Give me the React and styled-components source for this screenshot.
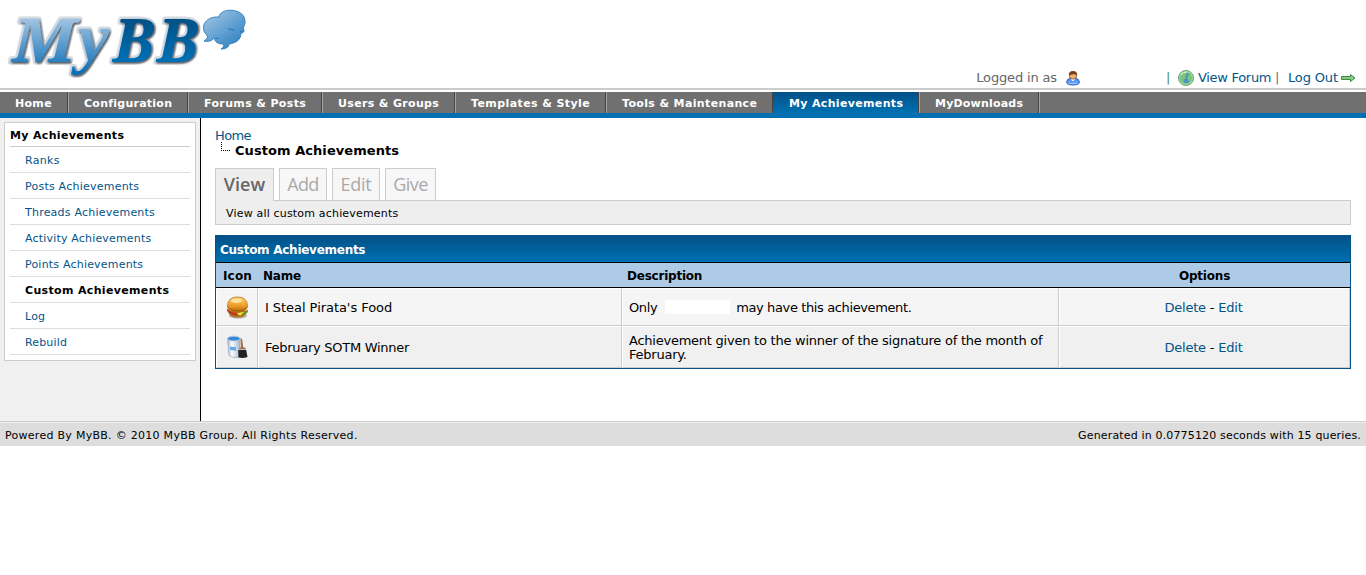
import React from "react";
import styled, { createGlobalStyle, css } from "styled-components";

const Global = createGlobalStyle`
  * { box-sizing: border-box; }
  body {
    margin: 0;
    background: #fff;
    color: #000;
    font: 13px/16px Verdana, "DejaVu Sans", sans-serif;
  }
`;

const T = styled.span`
  letter-spacing: ${(p) => p.$ls || 0}px;
  white-space: nowrap;
`;
const Link = styled.a`
  color: #035488;
  text-decoration: none;
  white-space: nowrap;
  ${(p) => p.$ls && css`letter-spacing: ${p.$ls}px;`}
`;

const Header = styled.header`
  display: flex;
  justify-content: space-between;
  align-items: flex-end;
  height: 90px;
  border-bottom: 2px solid #ccc;
`;
const Welcome = styled.div`
  display: flex;
  align-items: center;
  height: 20px;
  margin-right: 10px;
  color: #666;
`;
const UserSlot = styled.span`
  display: flex;
  width: 109px;
  padding-left: 8px;
`;
const Bar = styled.span`
  width: ${(p) => p.$w}px;
  color: ${(p) => (p.$green ? "#3f8f3f" : "#5f6f80")};
`;
const ForumLink = styled(Link)`
  width: 77px;
  margin-left: 4px;
`;
const LogoutLink = styled(Link)`
  width: 52px;
`;

const Menu = styled.nav`
  display: flex;
  height: 26px;
  margin-top: 2px;
  background: #707070;
  border-bottom: 5px solid #0070b2;
`;
const MenuItem = styled.a`
  width: ${(p) => p.$w}px;
  padding-left: 16px;
  border-right: 1px solid #444;
  box-shadow: 1px 0 0 #a5a5a5;
  background: ${(p) => (p.$active ? "linear-gradient(#025185, #0070b2)" : "transparent")};
  color: #fff;
  font-size: 11px;
  font-weight: bold;
  line-height: 23px;
  white-space: nowrap;
  letter-spacing: ${(p) => p.$ls}px;
  &:first-child { padding-left: 15px; }
`;

const Body = styled.div`
  display: flex;
  height: 303px;
`;
const Sidebar = styled.aside`
  width: 201px;
  padding: 4px;
  background: #f0f0f0;
  border-right: 1px solid #000;
`;
const SideBox = styled.div`
  width: 192px;
  height: 239px;
  padding: 0 5px;
  border: 1px solid #ccc;
  background: #fff;
  font-size: 11px;
`;
const SideTitle = styled.div`
  height: 24px;
  border-bottom: 1px solid #ccc;
  font-weight: bold;
  line-height: 25px;
`;
const SideItem = styled.div`
  height: 26px;
  padding-left: 15px;
  border-bottom: 1px solid #ddd;
  line-height: 27px;
  ${(p) => p.$active && css`font-weight: bold;`}
`;

const Page = styled.main`
  flex: 1;
  padding: 10px 15px 0 14px;
`;
const Crumb = styled.div`
  height: 15px;
`;
const CrumbActive = styled.div`
  display: flex;
  height: 15px;
  margin-bottom: 10px;
  padding-left: 6px;
  gap: 5px;
  font-weight: bold;
  line-height: 16px;
`;
const Branch = styled.span`
  width: 9px;
  height: 9px;
  margin-top: -1px;
  border-left: 1px dotted #000;
  border-bottom: 1px dotted #000;
`;
const Tabs = styled.div`
  display: flex;
  gap: 5px;
  height: 33px;
`;
const Tab = styled.div`
  position: relative;
  z-index: 1;
  width: ${(p) => p.$w}px;
  height: ${(p) => (p.$active ? 33 : 32)}px;
  border: 1px solid #ccc;
  border-bottom: none;
  background: ${(p) => (p.$active ? "#eee" : "#f7f7f7")};
  color: ${(p) => (p.$active ? "#666" : "#aaa")};
  font: ${(p) => (p.$active ? 600 : 400)} 18px/31px "Open Sans", sans-serif;
  letter-spacing: ${(p) => p.$ls}px;
  text-align: center;
`;
const TabText = styled.div`
  height: 25px;
  margin-top: -1px;
  padding-left: 10px;
  border: 1px solid #ccc;
  background: #eee;
  font-size: 11px;
  line-height: 25px;
`;

const Table = styled.section`
  margin-top: 10px;
  border: 1px solid #035488;
`;
const TableTitle = styled.div`
  height: 27px;
  padding-left: 4px;
  border-bottom: 1px solid #000;
  background: linear-gradient(#025185, #0070b2);
  color: #fff;
  font-size: 12px;
  font-weight: bold;
  line-height: 28px;
`;
const Row = styled.div`
  display: grid;
  grid-template-columns: 42px 364px 437px 1fr;
  height: ${(p) => p.$h}px;
  ${(p) => p.$head && css`
    padding-top: 1px;
    background: #adcbe7;
    border-bottom: 1px solid #000;
    font-size: 12px;
    font-weight: bold;
  `}
`;
const Cell = styled.div`
  display: flex;
  align-items: center;
  justify-content: ${(p) => (p.$center ? "center" : "flex-start")};
  padding-left: ${(p) => p.$pl || 0}px;
  line-height: 14px;
`;
const DataCell = styled(Cell)`
  padding-top: ${(p) => (p.$icon ? 0 : 2)}px;
  border: 1px solid #fff;
  border-right-color: #ccc;
  border-bottom-color: #ccc;
  background: ${(p) => (p.$alt ? "#f0f0f0" : "#f5f5f5")};
`;
const Blank = styled.span`
  width: 65px;
  height: 14px;
  margin: -3px 6px 0 8px;
  background: #fff;
`;
const OptionLinks = styled(T)`
  padding-right: 2px;
`;
const Footer = styled.footer`
  display: flex;
  justify-content: space-between;
  height: 25px;
  padding: 0 5px;
  border-top: 1px solid #ccc;
  box-shadow: inset 0 1px 0 #efefef;
  background: #ddd;
  font-size: 11px;
  line-height: 27px;
`;

const LogoSvg = styled.svg`
  overflow: visible;
`;

const Letters = ({ my, bb, ...rest }) => (
  <g {...rest}>
    <text x="12" y="62" fill={my} textLength="63" lengthAdjust="spacingAndGlyphs">M</text>
    <text x="78" y="61" fill={my} fontFamily="'Liberation Serif',serif" fontSize="67" textLength="31" lengthAdjust="spacingAndGlyphs">y</text>
    <text x="113" y="62" fill={bb} textLength="41" lengthAdjust="spacingAndGlyphs">B</text>
    <text x="157" y="62" fill={bb} textLength="41" lengthAdjust="spacingAndGlyphs">B</text>
  </g>
);

const Logo = () => (
  <LogoSvg width="260" height="88" viewBox="0 0 260 88">
    <defs>
      <linearGradient id="my" x1="0" y1="17" x2="0" y2="72" gradientUnits="userSpaceOnUse">
        <stop offset="0" stopColor="#a6c6e4" /><stop offset="1" stopColor="#0f70b7" />
      </linearGradient>
      <linearGradient id="bb" x1="0" y1="18" x2="0" y2="63" gradientUnits="userSpaceOnUse">
        <stop offset="0" stopColor="#035084" /><stop offset="1" stopColor="#0071b8" />
      </linearGradient>
      <linearGradient id="bubble" x1="0" y1="0" x2=".8" y2="1">
        <stop offset="0" stopColor="#a9cbe8" /><stop offset="1" stopColor="#2b7fc0" />
      </linearGradient>
      <filter id="soft" x="-10%" y="-20%" width="120%" height="150%">
        <feDropShadow dx="1" dy="1.2" stdDeviation="0.8" floodColor="#111" floodOpacity=".8" />
      </filter>
    </defs>
    <g fontFamily="'Noto Serif','DejaVu Serif',serif" fontWeight="bold" fontStyle="italic" fontSize="61" strokeLinejoin="round">
      <Letters my="#d0dcea" bb="#d8d8d8" stroke="#d3dbe4" strokeWidth="5" />
      <Letters my="url(#my)" bb="url(#bb)" filter="url(#soft)" />
    </g>
    <path d="M219 17C220 8 240 8 244 17C246 22 245 25 243 28C245 30 244 33 241 33C241 40 236 43 229 44C229 47 226 49 221 49C224 47 224 46 223 44C218 44 215 42 214 38C212 41 208 42 204 41C207 39 208 37 207 35C200 30 203 16 219 17Z" fill="url(#bubble)" stroke="#2c7cbc" strokeWidth=".9" />
    <path d="M228 28.500q2 1.500 4 .8q1 1.500 2.500 1M240 31.500q2 .8 3.500 .3M215.500 38.300h3" fill="none" stroke="#2373b5" />
  </LogoSvg>
);

const UserIcon = () => (
  <svg width="16" height="16" viewBox="0 0 16 16">
    <path d="M1.500 12.500Q2 8.500 5 8.500h6q3 0 3.500 4Q13.500 15 8 15T1.500 12.500Z" fill="#5a9af5" stroke="#2a5fc0" />
    <path d="M3.500 13q4.500 1.500 9 0" fill="none" stroke="#a8ccff" />
    <path d="M5.500 8.500L8 11.500l2.500-3Z" fill="#fff" />
    <rect x="4.500" y="2.500" width="7" height="6.500" rx="2.800" fill="#e9ad76" stroke="#8a4a20" strokeWidth=".8" />
    <path d="M3.800 5.500Q3.500 1 8 1t4.200 4.500Q10 3.800 8 4.300T3.800 5.500Z" fill="#7a3d1b" />
  </svg>
);
const GlobeIcon = () => (
  <svg width="16" height="16" viewBox="0 0 16 16">
    <circle cx="8" cy="8" r="7.500" fill="#a4d8a0" stroke="#5fa864" />
    <circle cx="8" cy="8" r="5.600" fill="#4d97bd" />
    <path d="M2.800 6Q4 2.700 8 2.500L9 4 7 6 8 8 5.500 9.500 6 13Q2.500 11 2.800 6ZM10 5l3 0 .5 4-2.500 3-1.500-4Z" fill="#7cc873" />
    <path d="M3 5Q5 2 8.500 2" stroke="#e2f7de" fill="none" />
  </svg>
);
const ArrowIcon = () => (
  <svg width="16" height="16" viewBox="0 0 16 16">
    <path d="M1.500 6.500h9v-2l4.500 3.500-4.500 3.500v-2h-9Z" fill="#8ac983" stroke="#418a43" />
  </svg>
);
const BurgerIcon = () => (
  <svg width="23" height="23" viewBox="0 0 24 24">
    <defs>
      <linearGradient id="bun" x1="0" y1="0" x2="0" y2="1">
        <stop offset="0" stopColor="#ffd873" /><stop offset=".6" stopColor="#eb9c26" /><stop offset="1" stopColor="#b5650c" />
      </linearGradient>
    </defs>
    <ellipse cx="12.500" cy="20.500" rx="9.500" ry="3" fill="#777" opacity=".5" />
    <path d="M2 15Q3 22.500 12 22.500T22 15Z" fill="#b96a16" />
    <path d="M1 13q4 5 11 5t11-4v2.500q-3 4-11 4T1 15.500Z" fill="#5b9b26" />
    <path d="M1.500 13Q5 18 12 18v2.500Q4 20 1.500 15.500Z" fill="#cf2a1a" />
    <path d="M11 18l8-1.500-4 4Z" fill="#ffd83c" />
    <path d="M1.500 10.500Q2 1 12 1t10.500 9.500Q22 16.500 12 16.500T1.500 10.500Z" fill="url(#bun)" stroke="#b36c13" strokeWidth=".8" />
    <path d="M2.500 12Q6 15.500 12 15.500T21.500 12" fill="none" stroke="#8e4c08" opacity=".6" />
    <ellipse cx="11" cy="5" rx="5.500" ry="2.200" fill="#fff0bd" opacity=".7" />
  </svg>
);
const PaintIcon = () => (
  <svg width="24" height="24" viewBox="0 0 24 24">
    <defs>
      <linearGradient id="can" x1="0" y1="0" x2="1" y2="0">
        <stop offset="0" stopColor="#a9b4c4" /><stop offset=".35" stopColor="#fff" /><stop offset="1" stopColor="#a8b6ca" />
      </linearGradient>
    </defs>
    <path d="M2.500 4l1.500 16.500q5 3.500 11 1.500V4Z" fill="url(#can)" stroke="#9aa8bc" strokeWidth=".7" />
    <ellipse cx="8.800" cy="3.600" rx="6.300" ry="2.400" fill="#3487dd" stroke="#b8c9de" />
    <path d="M5 11.500l6 .8v3.500l-6-.7Z" fill="#65a9e8" />
    <path d="M15.500 3q2 .5 2 4l.8 5 2.700 1.500v2h-7v-2l2-1.500Z" fill="#a9704a" />
    <path d="M13.200 15h8l1.300 7q-4 1.500-9 .5Z" fill="#222" />
    <path d="M13.500 14.500h7.600" stroke="#bbb" />
  </svg>
);

const MENU = [
  ["Home", 68, 0.3],
  ["Configuration", 120, 0.25],
  ["Forums & Posts", 134, 0.36],
  ["Users & Groups", 133, 0.34],
  ["Templates & Style", 151, 0.41],
  ["Tools & Maintenance", 167, 0.36],
  ["My Achievements", 146, 0.34, true],
  ["MyDownloads", 120, 0.2],
];
const SIDE = [
  ["Ranks", 0.3],
  ["Posts Achievements", 0.23],
  ["Threads Achievements", 0.22],
  ["Activity Achievements", 0.18],
  ["Points Achievements", 0.2],
  ["Custom Achievements", 0.34, true],
  ["Log", 0.2],
  ["Rebuild", 0.15],
];
const TABS = [["View", 59, 0, true], ["Add", 48, -0.7], ["Edit", 48, -0.3], ["Give", 51, -0.5]];

const Options = () => (<OptionLinks $ls={-0.2}><Link>Delete</Link> - <Link>Edit</Link></OptionLinks>);

export default function App() {
  return (
    <>
      <Global />
      <Header>
        <Logo />
        <Welcome>
          <T $ls={-0.15}>Logged in as</T>
          <UserSlot><UserIcon /></UserSlot>
          <Bar $green $w={12}>|</Bar>
          <GlobeIcon />
          <ForumLink $ls={-0.3}>View Forum</ForumLink>
          <Bar $w={13}>|</Bar>
          <LogoutLink $ls={-0.15}>Log Out</LogoutLink>
          <ArrowIcon />
        </Welcome>
      </Header>
      <Menu>
        {MENU.map(([label, w, ls, active]) => (
          <MenuItem key={label} $w={w} $ls={ls} $active={active}>{label}</MenuItem>
        ))}
      </Menu>
      <Body>
        <Sidebar>
          <SideBox>
            <SideTitle><T $ls={0.34}>My Achievements</T></SideTitle>
            {SIDE.map(([label, ls, active]) => (
              <SideItem key={label} $active={active}>
                {active ? <T $ls={ls}>{label}</T> : <Link $ls={ls}>{label}</Link>}
              </SideItem>
            ))}
          </SideBox>
        </Sidebar>
        <Page>
          <Crumb><Link $ls={-0.6}>Home</Link></Crumb>
          <CrumbActive><Branch /><T $ls={0.06}>Custom Achievements</T></CrumbActive>
          <Tabs>
            {TABS.map(([label, w, ls, active]) => (
              <Tab key={label} $w={w} $ls={ls} $active={active}>{label}</Tab>
            ))}
          </Tabs>
          <TabText><T $ls={0.18}>View all custom achievements</T></TabText>
          <Table>
            <TableTitle><T $ls={-0.27}>Custom Achievements</T></TableTitle>
            <Row $h={25} $head>
              <Cell $center $pl={1}><T $ls={0.2}>Icon</T></Cell>
              <Cell $pl={5}><T $ls={-0.2}>Name</T></Cell>
              <Cell $pl={5}><T $ls={-0.22}>Description</T></Cell>
              <Cell $center><T $ls={-0.2}>Options</T></Cell>
            </Row>
            <Row $h={38}>
              <DataCell $icon $center><BurgerIcon /></DataCell>
              <DataCell $pl={6}><T $ls={-0.05}>I Steal Pirata's Food</T></DataCell>
              <DataCell $pl={6}><T $ls={-0.4}>Only</T><Blank /><T $ls={-0.38}>may have this achievement.</T></DataCell>
              <DataCell $center><Options /></DataCell>
            </Row>
            <Row $h={42}>
              <DataCell $icon $alt $center><PaintIcon /></DataCell>
              <DataCell $alt $pl={6}><T $ls={-0.27}>February SOTM Winner</T></DataCell>
              <DataCell $alt $pl={6}>
                <T $ls={-0.24}>Achievement given to the winner of the signature of the month of<br />February.</T>
              </DataCell>
              <DataCell $alt $center><Options /></DataCell>
            </Row>
          </Table>
        </Page>
      </Body>
      <Footer>
        <T $ls={0.28}>Powered By MyBB. © 2010 MyBB Group. All Rights Reserved.</T>
        <T $ls={0.16}>Generated in 0.0775120 seconds with 15 queries.</T>
      </Footer>
    </>
  );
}
